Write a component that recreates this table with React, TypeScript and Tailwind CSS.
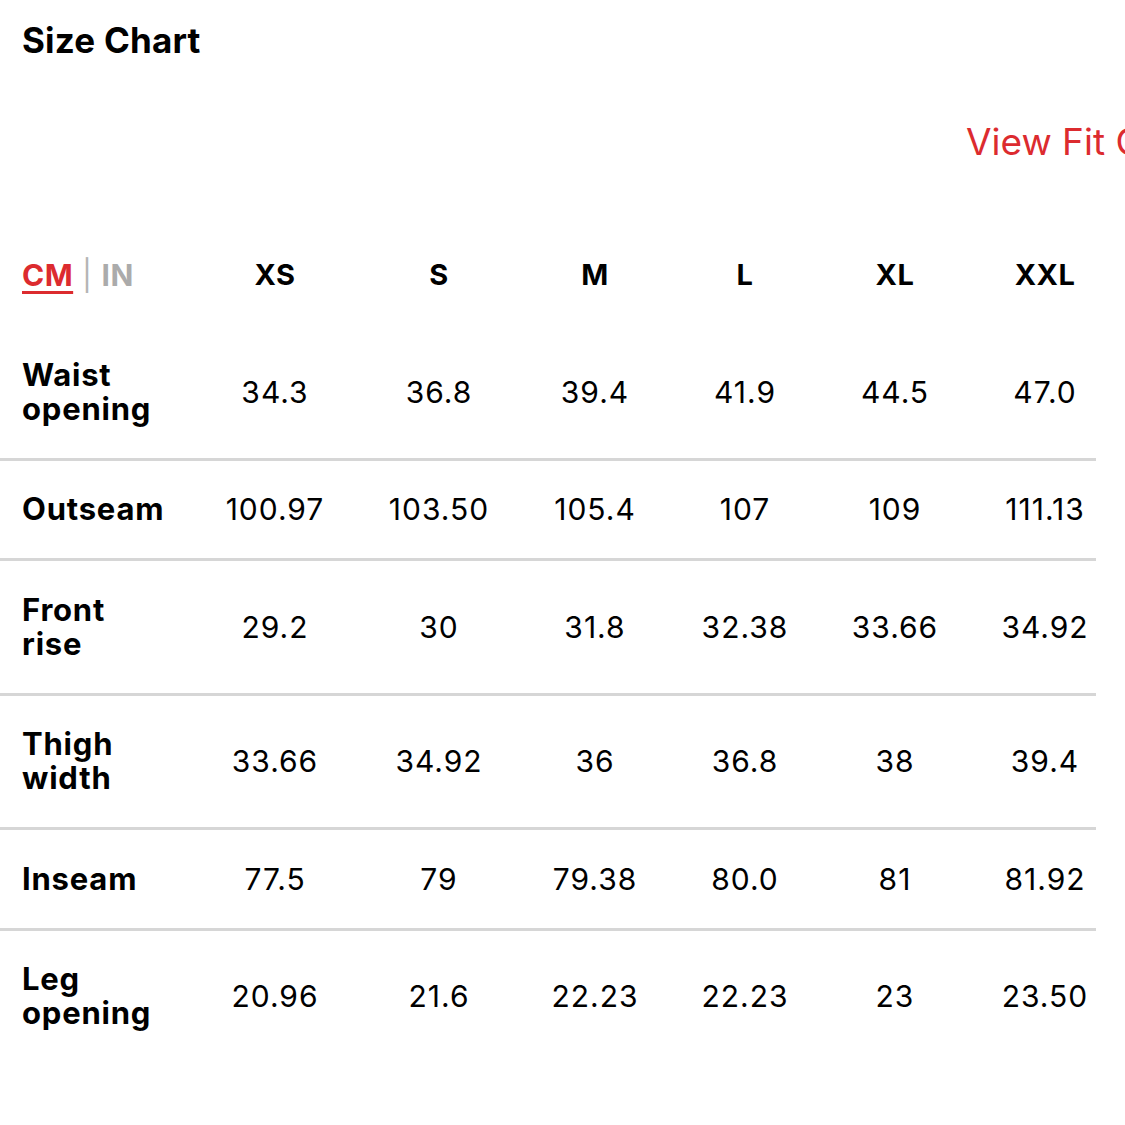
const sizes = ["XS", "S", "M", "L", "XL", "XXL"];

const rows = [
  { label: ["Waist", "opening"], values: ["34.3", "36.8", "39.4", "41.9", "44.5", "47.0"] },
  { label: ["Outseam"], values: ["100.97", "103.50", "105.4", "107", "109", "111.13"] },
  { label: ["Front", "rise"], values: ["29.2", "30", "31.8", "32.38", "33.66", "34.92"] },
  { label: ["Thigh", "width"], values: ["33.66", "34.92", "36", "36.8", "38", "39.4"] },
  { label: ["Inseam"], values: ["77.5", "79", "79.38", "80.0", "81", "81.92"] },
  { label: ["Leg", "opening"], values: ["20.96", "21.6", "22.23", "22.23", "23", "23.50"] },
];

// column widths picked so each size column is centred where the chart has it
const cols = "grid grid-cols-[195px_160px_168px_144px_156px_144px_156px] items-center";

export default function App() {
  return (
    <div className="w-[1125px] h-[1125px] overflow-hidden bg-white text-black font-['Inter','Liberation_Sans',sans-serif]">
      <h1 className="pl-[22px] pt-[20px] text-[35px] leading-[40px] font-bold tracking-[0.2px]">Size Chart</h1>

      <div className="mt-[60px] pl-[966px] whitespace-nowrap text-[37px] leading-[44px] text-[#dc2b2f]">
        View Fit Guide
      </div>

      <div className="mt-[60px] w-[1096px]">
        {/* header */}
        <div className={`${cols} h-[102px]`}>
          <div className="pl-[22px] text-[30px] font-bold whitespace-nowrap tracking-[0.5px]">
            <span className="text-[#dc2b2f] underline decoration-[3px] underline-offset-[5px]">CM</span>
            <span className="text-[#b5b5b5] font-normal"> | </span>
            <span className="text-[#ababab]">IN</span>
          </div>
          {sizes.map((s) => (
            <div key={s} className="text-center text-[29px] font-bold tracking-[0.5px]">
              {s}
            </div>
          ))}
        </div>

        {rows.map((row, i) => (
          <div
            key={row.label.join(" ")}
            className={`${cols} py-[31.75px] ${i < rows.length - 1 ? "border-b-[3px] border-[#d6d6d6]" : ""}`}
          >
            <div className="pl-[22px] text-[31px] leading-[34px] font-bold tracking-[0.8px]">
              {row.label.map((l) => (
                <div key={l}>{l}</div>
              ))}
            </div>
            {row.values.map((v, j) => (
              <div key={j} className="text-center text-[30px] leading-[34px] tracking-[1px]">
                {v}
              </div>
            ))}
          </div>
        ))}
      </div>
    </div>
  );
}
